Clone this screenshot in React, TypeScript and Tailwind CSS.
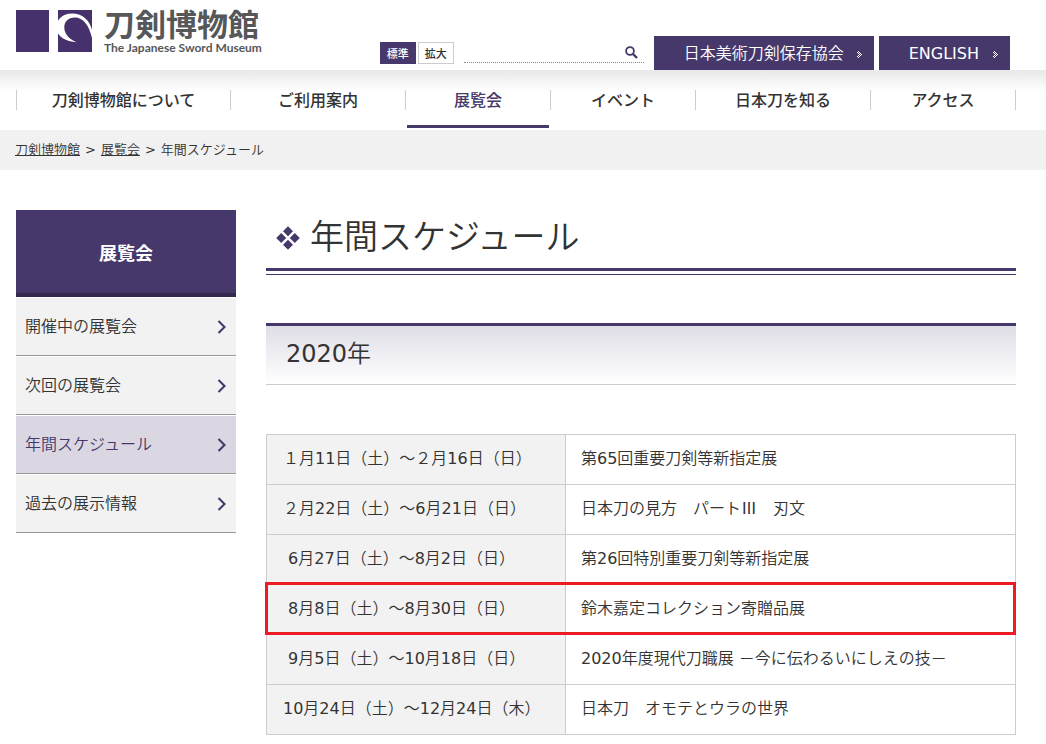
import React from "react";

const navItems = [
  { label: "刀剣博物館について" },
  { label: "ご利用案内" },
  { label: "展覧会", active: true },
  { label: "イベント" },
  { label: "日本刀を知る" },
  { label: "アクセス" },
];

const sideItems = [
  { label: "開催中の展覧会" },
  { label: "次回の展覧会" },
  { label: "年間スケジュール", active: true },
  { label: "過去の展示情報" },
];

const schedule = [
  { date: "１月11日（土）～２月16日（日）", title: "第65回重要刀剣等新指定展" },
  {
    date: "２月22日（土）～6月21日（日）",
    title: (
      <>
        日本刀の見方　パート<span className="font-['Noto_Sans_CJK_JP',sans-serif] leading-none">Ⅲ</span>　刃文
      </>
    ),
  },
  { date: "\u00a06月27日（土）～8月2日（日）", title: "第26回特別重要刀剣等新指定展" },
  { date: "\u00a08月8日（土）～8月30日（日）", title: "鈴木嘉定コレクション寄贈品展", marked: true },
  { date: "\u00a09月5日（土）～10月18日（日）", title: "2020年度現代刀職展 －今に伝わるいにしえの技－" },
  { date: "10月24日（土）～12月24日（木）", title: "日本刀　オモテとウラの世界" },
];

function LogoMark() {
  return (
    <svg width="76" height="42" viewBox="0 0 76 42" aria-hidden="true">
      <rect width="33" height="42" fill="#46316c" />
      <rect x="42" width="34" height="42" fill="#46316c" />
      <path
        d="M60.7 32.3 C50 31.5 41 27 40.5 18 C40 9 47 3.5 56 3.5 C67 3.5 74 11 76 20 L76 28 C73 15 67 7.5 59 7.5 C52 7.5 48 12 48.3 18 C48.6 24 53 29 60.7 32.3Z"
        fill="#fff"
      />
    </svg>
  );
}

function Chevron() {
  return (
    <svg width="10" height="14" viewBox="0 0 10 14" fill="none" aria-hidden="true">
      <path d="M1.5 1 L7.5 7 L1.5 13" stroke="#46386b" strokeWidth="2.1" />
    </svg>
  );
}

function TinyArrow() {
  return (
    <svg width="5" height="7" viewBox="0 0 5 7" fill="#fff" aria-hidden="true">
      <path d="M1 0h1v1H1zM0 1h1v1H0zM2 1h1v1H2zM1 2h1v1H1zM3 2h1v1H3zM2 3h1v1H2zM4 3h1v1H4zM3 4h1v1H3zM1 4h1v1H1zM0 5h1v1H0zM2 5h1v1H2zM1 6h1v1H1z" />
    </svg>
  );
}

function Diamonds() {
  return (
    <svg width="24" height="24" viewBox="0 0 24 24" fill="#46386b" aria-hidden="true">
      <path d="M12 0.2 17 5.2 12 10.2 7 5.2zM12 13.8 17 18.8 12 23.8 7 18.8zM5.2 7 10.2 12 5.2 17 0.2 12zM18.8 7 23.8 12 18.8 17 13.8 12z" />
    </svg>
  );
}

export default function App() {
  return (
    <div
      className="bg-white font-['DejaVu_Sans','Noto_Sans_CJK_JP_DemiLight','Noto_Sans_CJK_JP',sans-serif] text-base font-normal text-[#333]"
      lang="ja"
    >
      <header>
        <div className="flex h-[70px] items-end pr-9 pl-4">
          <a href="#top" className="mb-4 flex items-center gap-3">
            <LogoMark />
            <span className="flex flex-col gap-[2px] font-['Lato','Noto_Sans_CJK_JP',sans-serif] font-bold text-[#555759]">
              <span className="text-[31px] leading-8">刀剣博物館</span>
              <span className="text-xs leading-3 whitespace-nowrap">The Japanese Sword Museum</span>
            </span>
          </a>
          <div className="mb-[6px] ml-auto flex gap-[2px] font-['Noto_Sans_CJK_JP',sans-serif] text-[11px] font-medium">
            <button type="button" className="h-[22px] w-9 bg-[#46386b] text-white">標準</button>
            <button type="button" className="h-[22px] w-9 border border-[#ccc] bg-white">拡大</button>
          </div>
          <form className="mr-[10px] mb-[7px] ml-[10px] flex w-[180px] items-center border-b border-dotted border-[#888]">
            <input type="search" aria-label="サイト内検索" className="h-5 min-w-0 flex-1 bg-transparent text-sm outline-none" />
            <button type="button" aria-label="検索" className="mr-[6px]">
              <svg width="13" height="13" viewBox="0 0 13 13" fill="none" stroke="#46386b" aria-hidden="true">
                <circle cx="5" cy="5" r="3.9" strokeWidth="1.8" />
                <path d="M8 8 L12 12" strokeWidth="2.4" />
              </svg>
            </button>
          </form>
          <div className="flex gap-[5px] whitespace-nowrap text-white">
            <a href="#nbthk" className="flex h-[34px] items-center gap-[13px] bg-[#46386b] pt-[2px] pr-3 pl-[30px]">
              日本美術刀剣保存協会
              <TinyArrow />
            </a>
            <a href="#english" className="flex h-[34px] items-center gap-[14px] bg-[#46386b] pt-[2px] pr-3 pl-[30px]">
              ENGLISH
              <TinyArrow />
            </a>
          </div>
        </div>
        <nav className="bg-linear-to-b from-[#e8e8e8] to-white to-35% pr-[30px] pl-4">
          <ul className="grid h-[60px] grid-cols-[214fr_175fr_145fr_145fr_175fr_146fr] font-['Noto_Sans_CJK_JP',sans-serif] font-medium">
            {navItems.map((item) => (
              <li key={item.label} className="group flex flex-col pt-5">
                <a
                  href="#nav"
                  className="flex h-5 items-center justify-center border-l border-[#ccc] pb-[2px] whitespace-nowrap group-last:border-r"
                >
                  <span className={item.active ? "text-[#46386b]" : ""}>{item.label}</span>
                </a>
                {item.active && <span className="mr-px ml-[2px] mt-[15px] h-[3px] bg-[#46386b]" />}
              </li>
            ))}
          </ul>
        </nav>
      </header>

      <nav aria-label="パンくず" className="flex h-10 items-center gap-[5px] bg-[#f1f1f1] px-[15px] text-[13px]">
        <a href="#home" className="underline">刀剣博物館</a>
        <span>&gt;</span>
        <a href="#exhibitions" className="underline">展覧会</a>
        <span>&gt;</span>
        <span>年間スケジュール</span>
      </nav>

      <div className="flex items-start gap-[30px] pt-10 pr-[30px] pb-2 pl-4">
        <aside className="w-[220px] shrink-0">
          <h2 className="flex h-[87px] items-center justify-center border-b-4 border-[#34294f] bg-[#46386b] font-['Noto_Sans_CJK_JP',sans-serif] text-lg font-bold text-white">
            展覧会
          </h2>
          <ul>
            {sideItems.map((item) => (
              <li key={item.label} className="border-b border-[#999] pt-px">
                <a
                  href="#side"
                  className={
                    item.active
                      ? "flex h-[57px] items-center justify-between bg-[#dad7e2] px-[9px] text-[#46386b]"
                      : "flex h-[57px] items-center justify-between bg-[#f2f2f2] px-[9px]"
                  }
                >
                  {item.label}
                  <Chevron />
                </a>
              </li>
            ))}
          </ul>
        </aside>

        <main className="min-w-0 flex-1">
          <div className="border-b border-[#46386b] pb-[3px]">
            <h1 className="flex h-[61px] items-center gap-[10px] border-b-[3px] border-[#46386b] pb-[3px] pl-[10px] text-[34px]">
              <Diamonds />
              年間スケジュール
            </h1>
          </div>
          <h2 className="mt-12 flex h-[62px] items-center border-t-[3px] border-b border-t-[#46386b] border-b-[#ccc] bg-linear-to-b from-[#dfdee7] to-white px-5 pb-[2px] text-2xl">
            2020年
          </h2>
          <table className="mt-[49px] w-full table-fixed border-collapse">
            <tbody>
              {schedule.map((row) => (
                <tr key={row.date} className="relative">
                  <th className="h-[50px] w-[299px] border border-[#ccc] bg-[#f2f2f2] px-4 pb-[2px] text-left font-normal whitespace-nowrap">
                    {row.date}
                    {row.marked && (
                      <span className="pointer-events-none absolute -top-[3px] right-0 bottom-0 -left-[2px] border-[3px] border-[#ed1c24]" />
                    )}
                  </th>
                  <td className="border border-[#ccc] px-[15px] pb-[2px]">{row.title}</td>
                </tr>
              ))}
            </tbody>
          </table>
        </main>
      </div>
    </div>
  );
}
